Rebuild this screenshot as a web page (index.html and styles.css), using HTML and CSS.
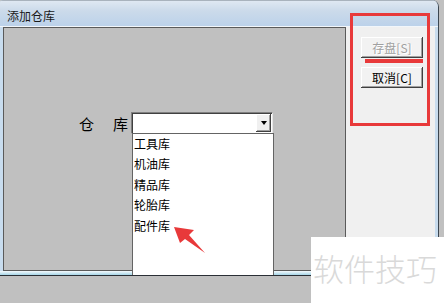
FILE: index.html
```html
<!DOCTYPE html>
<html>
<head>
<meta charset="utf-8">
<link rel="stylesheet" href="styles.css">
</head>
<body>
<div class="screen">
  <div class="window">
    <div class="titlebar">添加仓库</div>
    <div class="client">
      <div class="panel-left">
        <div class="field">
          <span class="label">仓　库</span>
          <div class="combo">
            <div class="combo-btn"><span class="tri"></span></div>
            <ul class="dropdown">
              <li>工具库</li>
              <li>机油库</li>
              <li>精品库</li>
              <li>轮胎库</li>
              <li>配件库</li>
            </ul>
          </div>
        </div>
      </div>
      <div class="panel-right">
        <button class="btn disabled">存盘[S]</button>
        <button class="btn">取消[C]</button>
      </div>
    </div>
    <div class="frame-bottom"></div>
  </div>
  <div class="red-box"></div>
  <div class="red-bar"></div>
  <svg class="arrow" width="40" height="36" viewBox="170 222 40 36">
    <polygon points="174,227 194,230 189,235 205,253 185,239 180,243" fill="#e8393a"/>
  </svg>
  <div class="watermark">软件技巧</div>
</div>
</body>
</html>
```
FILE: styles.css
```css
html, body {
  margin: 0;
  padding: 0;
}
body {
  font-family: "Noto Sans CJK SC", "Liberation Sans", sans-serif;
}
.screen {
  position: relative;
  width: 444px;
  height: 303px;
  background: #c0c0c0;
  overflow: hidden;
}
.window {
  width: 439px;
  height: 276px;
  box-sizing: border-box;
  display: flex;
  flex-direction: column;
  background: #c8dcee;
  border-right: 1px solid #3c4650;
  border-bottom: 1px solid #2a2f35;
  border-top-right-radius: 7px;
  border-top-left-radius: 3px;
  overflow: hidden;
}
.titlebar {
  height: 27px;
  box-sizing: border-box;
  padding-left: 7px;
  line-height: 29px;
  font-size: 12px;
  color: #1a1a1a;
  background: linear-gradient(to bottom, #dfe8f2 0%, #cbdaea 40%, #bcd2ea 100%);
  border-bottom: 1px solid #f2f6fa;
  border-top: 1px solid #a9b3bd;
}
.client {
  flex: 1;
  display: flex;
  margin: 0 3px 0 3px;
}
.panel-left {
  width: 343px;
  box-sizing: border-box;
  background: #c0c0c0;
  border: 1px solid #5a5a5a;
  padding: 84px 0 0 75px;
}
.panel-right {
  flex: 1;
  background: #f0f0f0;
  display: flex;
  flex-direction: column;
  align-items: flex-start;
  padding: 10px 0 0 15px;
  gap: 9px;
}
.frame-bottom {
  height: 4px;
  background: linear-gradient(to bottom, #f6fafc, #a6d6e8);
}
.field {
  display: flex;
  align-items: center;
}
.label {
  font-size: 15px;
  letter-spacing: 2px;
  color: #000;
  width: 52px;
}
.combo {
  position: relative;
  width: 142px;
  height: 22px;
  box-sizing: border-box;
  background: #fff;
  border-top: 1px solid #808080;
  border-left: 1px solid #808080;
  border-right: 1px solid #e8e8e8;
  border-bottom: 1px solid #e8e8e8;
  box-shadow: inset 1px 1px 0 #404040;
}
.combo-btn {
  position: absolute;
  right: 1px;
  top: 1px;
  width: 15px;
  height: 18px;
  box-sizing: border-box;
  background: #f0f0f0;
  box-shadow: inset -1px -1px 0 #404040, inset 1px 1px 0 #fff, inset -2px -2px 0 #a0a0a0;
  display: flex;
  align-items: center;
  justify-content: center;
}
.tri {
  width: 0;
  height: 0;
  border-left: 3.5px solid transparent;
  border-right: 3.5px solid transparent;
  border-top: 4px solid #000;
}
.dropdown {
  position: absolute;
  left: 0;
  top: 20px;
  width: 142px;
  height: 162px;
  box-sizing: border-box;
  margin: 0;
  padding: 0 0 0 1px;
  list-style: none;
  background: #fff;
  border: 1px solid #646464;
}
.dropdown li {
  font-size: 12px;
  line-height: 20.4px;
  color: #000;
}
.btn {
  width: 62px;
  height: 21px;
  padding: 0;
  border: none;
  background: #f2f2f2;
  box-shadow: inset -1px -1px 0 #404040, inset 1px 1px 0 #fff, inset -2px -2px 0 #a0a0a0;
  font-family: "Noto Sans CJK SC", "Liberation Sans", sans-serif;
  font-size: 12px;
  line-height: 21px;
  color: #000;
}
.btn.disabled {
  color: #a0a0a0;
  text-shadow: 1px 1px 0 #fff;
}
.red-box {
  position: absolute;
  left: 350px;
  top: 13px;
  width: 80px;
  height: 113px;
  box-sizing: border-box;
  border: 3px solid #e8393a;
}
.red-bar {
  position: absolute;
  left: 365px;
  top: 59px;
  width: 58px;
  height: 4px;
  background: #e8393a;
}
.arrow {
  position: absolute;
  left: 170px;
  top: 222px;
}
.watermark {
  position: absolute;
  left: 311px;
  top: 237px;
  width: 133px;
  height: 66px;
  box-sizing: border-box;
  background: #fff;
  padding: 14px 0 0 2px;
  font-size: 31px;
  line-height: 34px;
  font-weight: 300;
  color: #d9d9d9;
}
```
